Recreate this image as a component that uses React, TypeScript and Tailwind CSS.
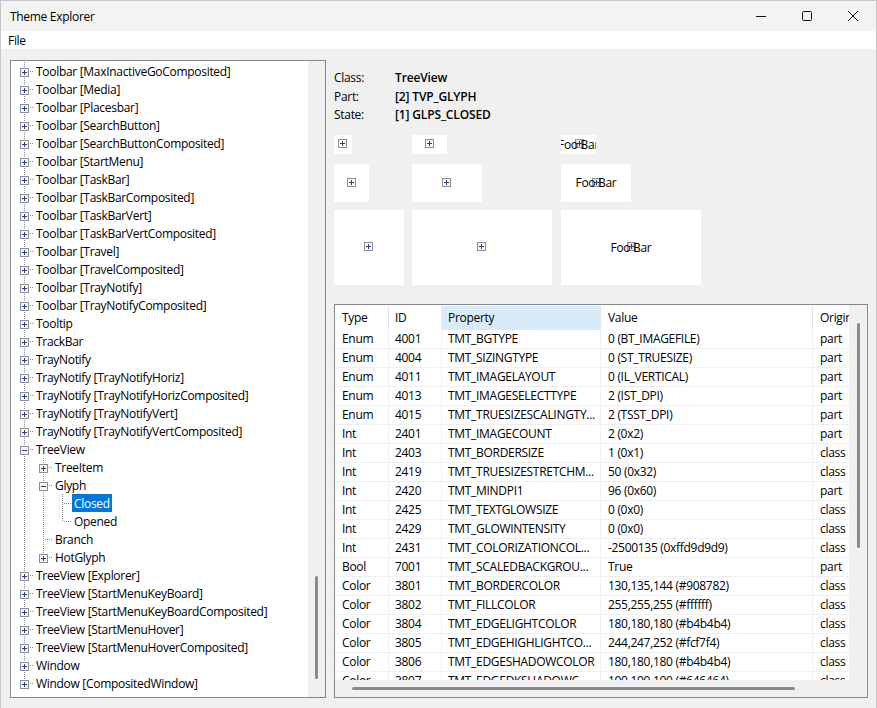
import React from "react";

type TreeRow = {
  label: string;
  level: number;
  kind: "plus" | "minus" | "leaf";
  selected?: boolean;
};

const top = (label: string): TreeRow => ({ label, level: 0, kind: "plus" });

const treeRows: TreeRow[] = [
  top("Toolbar [MaxInactiveGoComposited]"),
  top("Toolbar [Media]"),
  top("Toolbar [Placesbar]"),
  top("Toolbar [SearchButton]"),
  top("Toolbar [SearchButtonComposited]"),
  top("Toolbar [StartMenu]"),
  top("Toolbar [TaskBar]"),
  top("Toolbar [TaskBarComposited]"),
  top("Toolbar [TaskBarVert]"),
  top("Toolbar [TaskBarVertComposited]"),
  top("Toolbar [Travel]"),
  top("Toolbar [TravelComposited]"),
  top("Toolbar [TrayNotify]"),
  top("Toolbar [TrayNotifyComposited]"),
  top("Tooltip"),
  top("TrackBar"),
  top("TrayNotify"),
  top("TrayNotify [TrayNotifyHoriz]"),
  top("TrayNotify [TrayNotifyHorizComposited]"),
  top("TrayNotify [TrayNotifyVert]"),
  top("TrayNotify [TrayNotifyVertComposited]"),
  { label: "TreeView", level: 0, kind: "minus" },
  { label: "TreeItem", level: 1, kind: "plus" },
  { label: "Glyph", level: 1, kind: "minus" },
  { label: "Closed", level: 2, kind: "leaf", selected: true },
  { label: "Opened", level: 2, kind: "leaf" },
  { label: "Branch", level: 1, kind: "leaf" },
  { label: "HotGlyph", level: 1, kind: "plus" },
  top("TreeView [Explorer]"),
  top("TreeView [StartMenuKeyBoard]"),
  top("TreeView [StartMenuKeyBoardComposited]"),
  top("TreeView [StartMenuHover]"),
  top("TreeView [StartMenuHoverComposited]"),
  top("Window"),
  top("Window [CompositedWindow]"),
];

const props = [
  ["Enum", "4001", "TMT_BGTYPE", "0 (BT_IMAGEFILE)", "part"],
  ["Enum", "4004", "TMT_SIZINGTYPE", "0 (ST_TRUESIZE)", "part"],
  ["Enum", "4011", "TMT_IMAGELAYOUT", "0 (IL_VERTICAL)", "part"],
  ["Enum", "4013", "TMT_IMAGESELECTTYPE", "2 (IST_DPI)", "part"],
  ["Enum", "4015", "TMT_TRUESIZESCALINGTY...", "2 (TSST_DPI)", "part"],
  ["Int", "2401", "TMT_IMAGECOUNT", "2 (0x2)", "part"],
  ["Int", "2403", "TMT_BORDERSIZE", "1 (0x1)", "class"],
  ["Int", "2419", "TMT_TRUESIZESTRETCHM...", "50 (0x32)", "class"],
  ["Int", "2420", "TMT_MINDPI1", "96 (0x60)", "part"],
  ["Int", "2425", "TMT_TEXTGLOWSIZE", "0 (0x0)", "class"],
  ["Int", "2429", "TMT_GLOWINTENSITY", "0 (0x0)", "class"],
  ["Int", "2431", "TMT_COLORIZATIONCOL...", "-2500135 (0xffd9d9d9)", "class"],
  ["Bool", "7001", "TMT_SCALEDBACKGROU...", "True", "part"],
  ["Color", "3801", "TMT_BORDERCOLOR", "130,135,144 (#908782)", "class"],
  ["Color", "3802", "TMT_FILLCOLOR", "255,255,255 (#ffffff)", "class"],
  ["Color", "3804", "TMT_EDGELIGHTCOLOR", "180,180,180 (#b4b4b4)", "class"],
  ["Color", "3805", "TMT_EDGEHIGHLIGHTCO...", "244,247,252 (#fcf7f4)", "class"],
  ["Color", "3806", "TMT_EDGESHADOWCOLOR", "180,180,180 (#b4b4b4)", "class"],
  ["Color", "3807", "TMT_EDGEDKSHADOWC...", "100,100,100 (#646464)", "class"],
];

function Glyph({ open, clear }: { open?: boolean; clear?: boolean }) {
  return (
    <svg width="9" height="9" viewBox="0 0 9 9" className="block" shapeRendering="crispEdges">
      <rect x="0.5" y="0.5" width="8" height="8" fill={clear ? "#e4e4e4" : "#f7f7f7"} stroke="#8e8f8f" />
      <rect x="2" y="4" width="5" height="1" fill="#2c3f7e" />
      {!open && <rect x="4" y="2" width="1" height="5" fill="#2c3f7e" />}
    </svg>
  );
}

// dotted tree connectors for one 18px row
function Connectors({ row, index }: { row: TreeRow; index: number }) {
  const dots: React.ReactNode[] = [];
  const vline = (x: number, y1: number, y2: number) => {
    for (let y = y1; y < y2; y += 2) {
      dots.push(<rect key={`v${x}-${y}`} x={x} y={y} width="1" height="1" fill="#8a8a8a" />);
    }
  };
  const hline = (x1: number, x2: number, y: number) => {
    for (let x = x1; x < x2; x += 2) {
      dots.push(<rect key={`h${x}-${y}`} x={x} y={y} width="1" height="1" fill="#8a8a8a" />);
    }
  };
  const base = 13;
  const lastTop = index === treeRows.length - 1;
  // level 0 trunk
  vline(base, 0, row.level === 0 && lastTop ? 9 : 18);
  if (row.level >= 1) {
    // level 1 trunk runs from TreeItem down to HotGlyph
    vline(base + 19, 0, row.label === "HotGlyph" ? 9 : 18);
    if (row.level === 1) hline(base + 19 + 2, base + 19 + 10, 9);
  }
  if (row.level === 2) {
    vline(base + 38, 0, row.label === "Opened" ? 9 : 18);
    hline(base + 38 + 2, base + 38 + 10, 9);
  }
  if (row.level === 0) hline(base + 2, base + 10, 9);
  return (
    <svg width="100" height="18" className="absolute left-0 top-0" shapeRendering="crispEdges">
      {dots}
    </svg>
  );
}

function TreeLine({ row, index }: { row: TreeRow; index: number }) {
  const cx = row.level === 0 ? "ml-[9px]" : row.level === 1 ? "ml-[28px]" : "ml-[47px]";
  return (
    <div className="relative flex h-[18px] items-center">
      <Connectors row={row} index={index} />
      <div className={`relative z-10 flex h-[18px] items-center ${cx}`}>
        <div className="flex w-[9px] justify-center pt-[3px]">
          {row.kind !== "leaf" && <Glyph open={row.kind === "minus"} />}
        </div>
        <span
          className={`ml-[5px] h-[18px] whitespace-nowrap px-[2px] leading-[19px] ${
            row.selected ? "bg-[#0078d7] text-white" : "text-black"
          }`}
        >
          {row.label}
        </span>
      </div>
    </div>
  );
}

function Cell({ w, h, foo }: { w: string; h: string; foo?: boolean }) {
  return (
    <div className={`relative flex items-center justify-center overflow-hidden bg-white ${w} ${h}`}>
      <div className={`absolute top-[calc(50%-5px)] ${foo ? "left-[calc(50%-4px)]" : "left-[calc(50%-5px)]"}`}>
        <Glyph clear={foo} />
      </div>
      {foo && <span className="relative mt-[1px] whitespace-nowrap text-[12px] leading-none">Foo Bar</span>}
    </div>
  );
}

const headCls = ["w-[54px]", "w-[52px]", "w-[160px]", "w-[212px]", "w-[36px]"];
const rowCls = ["w-[54px]", "w-[53px]", "w-[159px]", "w-[212px]", "w-[36px]"];
const rowPad = ["pl-[7px]", "pl-[6px]", "pl-[6px]", "pl-[7px]", "pl-[7px]"];

export default function App() {
  return (
    <div className="flex h-[708px] w-[877px] flex-col overflow-hidden border border-b-0 border-[#c8c8c8] bg-[#f0f0f0] text-[12px] tracking-[-0.3px] text-black [font-family:'Open_Sans',sans-serif]">
      {/* title bar */}
      <div className="flex h-[30px] shrink-0 items-center justify-between bg-[#f3f3f3] pl-[9px]">
        <span className="pt-[1px]">Theme Explorer</span>
        <div className="flex h-full items-center">
          <div className="flex h-full w-[46px] items-center justify-center">
            <svg width="10" height="10" viewBox="0 0 10 10" shapeRendering="crispEdges">
              <rect x="0" y="5" width="10" height="1" fill="#111" />
            </svg>
          </div>
          <div className="flex h-full w-[46px] items-center justify-center">
            <svg width="10" height="10" viewBox="0 0 10 10">
              <rect x="0.5" y="0.5" width="9" height="9" rx="1" fill="none" stroke="#111" />
            </svg>
          </div>
          <div className="flex h-full w-[46px] items-center justify-center">
            <svg width="10" height="10" viewBox="0 0 10 10">
              <path d="M0 0 L10 10 M10 0 L0 10" stroke="#111" strokeWidth="1" />
            </svg>
          </div>
        </div>
      </div>
      {/* menu */}
      <div className="flex h-[18px] shrink-0 items-center bg-white pl-[7px] pt-[2px]">File</div>

      <div className="flex min-h-0 flex-1 pl-[9px] pt-[11px]">
        {/* tree */}
        <div className="flex h-[638px] w-[316px] shrink-0 border border-[#828790] bg-white">
          <div className="min-w-0 flex-1 overflow-hidden pt-[1px]">
            {treeRows.map((row, i) => (
              <TreeLine key={i} row={row} index={i} />
            ))}
          </div>
          <div className="flex w-[17px] shrink-0 justify-center bg-[#f0f0f0] pt-[515px]">
            <div className="h-[103px] w-[3px] rounded-full bg-[#8a8a8a]" />
          </div>
        </div>

        {/* right side */}
        <div className="ml-[8px] flex w-[534px] shrink-0 flex-col">
          <div className="grid grid-cols-[61px_1fr] pt-[9px] leading-[18.5px]">
            <span>Class:</span>
            <b className="font-semibold tracking-[-0.15px]">TreeView</b>
            <span>Part:</span>
            <b className="font-semibold tracking-[-0.15px]">[2] TVP_GLYPH</b>
            <span>State:</span>
            <b className="font-semibold tracking-[-0.15px]">[1] GLPS_CLOSED</b>
          </div>

          <div className="mt-[10px] flex">
            <div className="flex w-[78px] flex-col gap-[10px]">
              <Cell w="w-[18px]" h="h-[19px]" />
              <Cell w="w-[35px]" h="h-[38px]" />
            </div>
            <div className="flex w-[149px] flex-col gap-[10px]">
              <Cell w="w-[35px]" h="h-[19px]" />
              <Cell w="w-[70px]" h="h-[38px]" />
            </div>
            <div className="flex flex-col gap-[10px]">
              <Cell w="w-[35px]" h="h-[19px]" foo />
              <Cell w="w-[70px]" h="h-[38px]" foo />
            </div>
          </div>
          <div className="mt-[8px] flex">
            <div className="w-[78px]">
              <Cell w="w-[70px]" h="h-[75px]" />
            </div>
            <div className="w-[149px]">
              <Cell w="w-[140px]" h="h-[75px]" />
            </div>
            <Cell w="w-[140px]" h="h-[75px]" foo />
          </div>

          {/* property table */}
          <div className="mt-[19px] flex h-[394px] flex-col border border-[#828790] bg-white">
            <div className="flex min-h-0 flex-1">
              <div className="min-w-0 flex-1 overflow-hidden">
                <div className="mt-[1px] flex h-[24px]">
                  {["Type", "ID", "Property", "Value", "Origin"].map((h, i) => (
                    <div
                      key={h}
                      className={`flex h-full shrink-0 items-center overflow-hidden whitespace-nowrap pt-[1px] ${i === 1 ? "pl-[6px]" : "pl-[7px]"} ${headCls[i]} ${
                        i === 2 ? "bg-[#d9ebf9]" : i === 4 ? "" : i === 1 ? "" : "border-r border-[#e5e5e5]"
                      }`}
                    >
                      {h}
                    </div>
                  ))}
                </div>
                {props.map((row, r) => (
                  <div key={r} className="flex h-[19px] border-b border-[#f0f0f0]">
                    {row.map((c, i) => (
                      <div
                        key={i}
                        className={`flex h-full shrink-0 items-center overflow-hidden whitespace-nowrap pt-[1px] ${rowPad[i]} ${rowCls[i]} ${
                          i === 4 ? "" : "border-r border-[#f0f0f0]"
                        }`}
                      >
                        {c}
                      </div>
                    ))}
                  </div>
                ))}
              </div>
              <div className="flex w-[18px] shrink-0 justify-center bg-[#f0f0f0] pt-[18px]">
                <div className="h-[225px] w-[3px] rounded-full bg-[#8a8a8a]" />
              </div>
            </div>
            <div className="flex h-[17px] shrink-0 items-center bg-[#f0f0f0] pl-[17px]">
              <div className="h-[3px] w-[443px] rounded-full bg-[#8a8a8a]" />
            </div>
          </div>
        </div>
      </div>
    </div>
  );
}
